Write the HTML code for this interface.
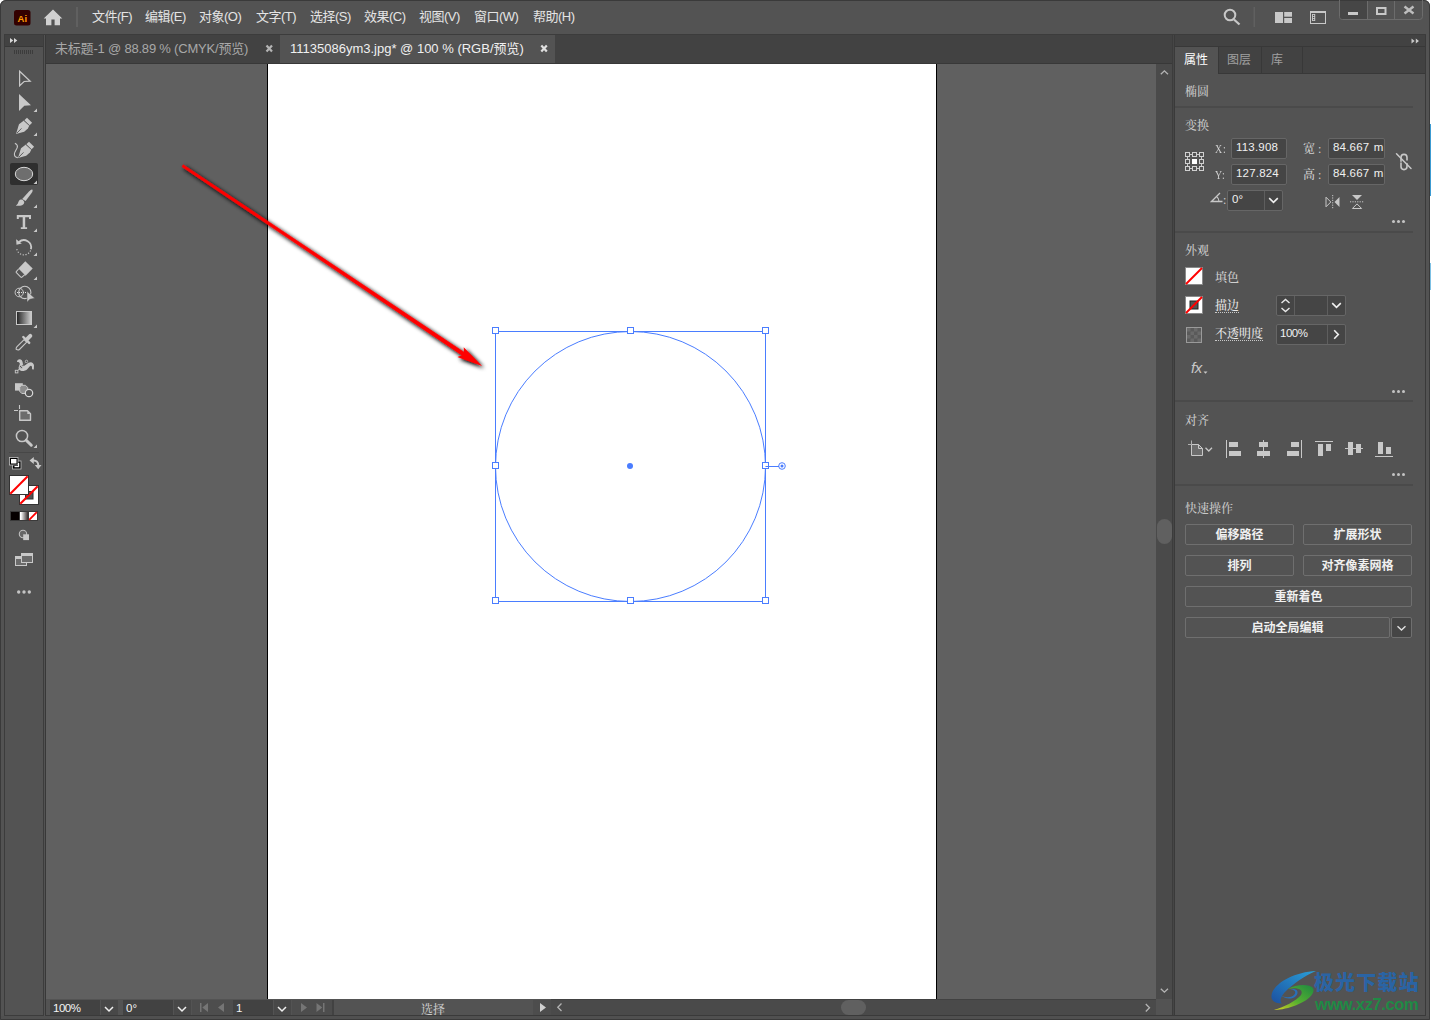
<!DOCTYPE html>
<html lang="zh-CN">
<head>
<meta charset="utf-8">
<title>Adobe Illustrator</title>
<style>
*{box-sizing:border-box;margin:0;padding:0}
html,body{width:1431px;height:1021px;overflow:hidden;background:#ffffff}
body{position:relative;font-family:"Liberation Sans","Noto Sans CJK SC",sans-serif;font-size:12px;color:#d6d6d6}
.abs{position:absolute}
#win{position:absolute;left:0;top:0;width:1430px;height:1020px;background:#535353;overflow:hidden;border-radius:6px 6px 0 0}
/* menu bar */
#menubar{position:absolute;left:0;top:0;width:1430px;height:34px;background:#535353}
#menubar .mi{position:absolute;top:8px;font-size:13px;color:#e4e4e4;white-space:nowrap;line-height:17px;letter-spacing:-0.5px}
/* tab bar */
#tabbar{position:absolute;left:45px;top:35px;width:1128px;height:28px;background:#424242;border-left:1px solid #383838;border-right:1px solid #3c3c3c}
.tab{position:absolute;top:0;height:28px;font-size:13px;line-height:27px;white-space:nowrap}
/* canvas */
#canvas{position:absolute;left:46px;top:64px;width:1110px;height:935px;background:#606060;overflow:hidden}
#artboard{position:absolute;left:221px;top:0;width:670px;height:935px;background:#fff;border-left:1px solid #000;border-right:1px solid #000}
/* left tools */
#tools{position:absolute;left:4px;top:34px;width:40px;height:982px;background:#535353;border:1px solid #3c3c3c}
/* right panel */
#rpanel{position:absolute;left:1175px;top:35px;width:250px;height:980px;background:#535353}
.sec{position:absolute;left:10px;margin-top:1px;font-size:12px;color:#c8c8c8;line-height:14px;white-space:nowrap}
.hr{position:absolute;left:0;width:238px;height:2px;background:#4a4a4a}
.inp{position:absolute;background:#454545;border:1px solid #666;border-radius:2px;color:#f0f0f0;font-family:"Liberation Sans",sans-serif;font-size:11.500px;letter-spacing:0.200px;word-spacing:1px;line-height:17px;white-space:nowrap;overflow:hidden}
.btn{position:absolute;height:21px;border:1px solid #6f6f6f;border-radius:2px;background:#535353;color:#f0f0f0;font-size:12px;font-weight:bold;text-align:center;line-height:21px;white-space:nowrap}
.lbl{position:absolute;font-size:12px;color:#e8e8e8;white-space:nowrap;line-height:14px}
.dots{position:absolute;width:14px;height:4px}
.dots i{position:absolute;top:0;width:3px;height:3px;border-radius:50%;background:#c4c4c4}
.ptab{font-size:12px;line-height:16px;white-space:nowrap}
.sm{font-family:"Liberation Serif","Noto Serif CJK SC",serif;color:#d0d0d0}
.ul{border-bottom:1px dotted #c8c8c8;line-height:12px !important;padding-top:1px;padding-bottom:0}
.sb{top:1px;height:15px;font-family:"Liberation Sans",sans-serif;font-size:11.500px;letter-spacing:0.200px;line-height:17px;overflow:hidden;color:#f4f4f4;white-space:nowrap}
.sec,.lbl,.ss{font-family:"Liberation Serif","Noto Serif CJK SC",serif}
.sec,.lbl,.ss{font-weight:500}
</style>
</head>
<body>
<div id="win">

<!-- MENU BAR -->
<div id="menubar">
  <svg class="abs" style="left:14px;top:10px" width="17" height="16" viewBox="0 0 17 16"><rect x="0" y="0" width="16.5" height="15.5" rx="2.5" fill="#330000"/><text x="8.3" y="11.6" font-family="Liberation Sans, sans-serif" font-size="9.5" font-weight="bold" fill="#ff9a00" text-anchor="middle">Ai</text></svg>
  <svg class="abs" style="left:43px;top:9px" width="20" height="17" viewBox="0 0 20 17"><path d="M10 0.5 L19.3 9.6 L17 9.6 L17 16.2 L11.6 16.2 L11.6 10.5 L8.4 10.5 L8.4 16.2 L3 16.2 L3 9.6 L0.7 9.6 Z" fill="#d0d0d0"/></svg>
  <div class="abs" style="left:76px;top:7px;width:2px;height:20px;background:#606060"></div>
  <div class="mi" style="left:92px">文件(F)</div>
  <div class="mi" style="left:145px">编辑(E)</div>
  <div class="mi" style="left:199px">对象(O)</div>
  <div class="mi" style="left:256px">文字(T)</div>
  <div class="mi" style="left:310px">选择(S)</div>
  <div class="mi" style="left:364px">效果(C)</div>
  <div class="mi" style="left:419px">视图(V)</div>
  <div class="mi" style="left:474px">窗口(W)</div>
  <div class="mi" style="left:533px">帮助(H)</div>
</div>
<div class="abs" style="left:4px;top:34px;width:1422px;height:1px;background:#3c3c3c"></div>

<!-- TAB BAR -->
<div id="tabbar">
  <div class="tab" style="left:0;width:234px;color:#a8a8a8;padding-left:9px;letter-spacing:-0.2px">未标题-1 @ 88.89 % (CMYK/预览)</div>
  <div class="tab" style="left:234px;width:275px;background:#535353;color:#f0f0f0;padding-left:10px">11135086ym3.jpg* @ 100 % (RGB/预览)</div>
</div>
<div class="abs" style="left:45px;top:63px;width:1128px;height:1px;background:#383838"></div>

<!-- CANVAS -->
<div id="canvas">
  <div id="artboard"></div>
  <svg class="abs" style="left:0;top:0" width="1110" height="935" viewBox="46 64 1110 935">
    <defs><filter id="ash" x="-5%" y="-5%" width="110%" height="110%"><feGaussianBlur in="SourceAlpha" stdDeviation="2.100"/><feOffset dx="1.700" dy="2.300"/><feComponentTransfer><feFuncA type="linear" slope="1.200"/></feComponentTransfer><feMerge><feMergeNode/><feMergeNode in="SourceGraphic"/></feMerge></filter></defs>
    <g filter="url(#ash)"><path d="M183.2 164.7L465.5 353.2L463.5 356.2L182.0 166.7Z" fill="#ff0000" stroke="#ff0000" stroke-width="0.600" stroke-linejoin="round"/><polygon points="482.1,366.1 463.7,347.3 464.1,354.4 457.3,357.0" fill="#ff0000"/></g>
    <g fill="none" stroke="#4a7dff" stroke-width="1">
      <rect x="495.500" y="331.500" width="270" height="270"/>
      <circle cx="630.500" cy="466.500" r="135"/>
      <path d="M768 466.500H779"/>
      <circle cx="782" cy="466" r="3.300"/>
    </g>
    <circle cx="782" cy="466" r="1.500" fill="#4a7dff"/>
    <circle cx="630" cy="466" r="3" fill="#4a7dff"/>
    <g fill="#ffffff" stroke="#4a7dff" stroke-width="1">
      <rect x="492.500" y="327.500" width="6" height="6"/><rect x="627.500" y="327.500" width="6" height="6"/><rect x="762.500" y="327.500" width="6" height="6"/>
      <rect x="492.500" y="462.500" width="6" height="6"/><rect x="762.500" y="462.500" width="6" height="6"/>
      <rect x="492.500" y="597.500" width="6" height="6"/><rect x="627.500" y="597.500" width="6" height="6"/><rect x="762.500" y="597.500" width="6" height="6"/>
    </g>
    <path d="M765.500 466.500H769" stroke="#4a7dff" stroke-width="1"/>
  </svg>
</div>

<!-- LEFT TOOLS -->
<div id="tools">
  <div class="abs" style="left:0;top:0;width:38px;height:11px;background:#424242"></div>
  <div class="abs" style="left:0;top:11px;width:38px;height:1px;background:#383838"></div>
</div>
<svg class="abs" style="left:0;top:0" width="45" height="620" viewBox="0 0 45 620">
  <path d="M10 38L13.300 40.500L10 43Z M14 38L17.300 40.500L14 43Z" fill="#d8d8d8"/>
  <path d="M14.500 50V54M16.500 50V54M18.500 50V54M20.500 50V54M22.500 50V54M24.500 50V54M26.500 50V54M28.500 50V54M30.500 50V54M32.500 50V54" stroke="#3c3c3c" stroke-width="1"/>
  <g fill="#c8c8c8">
    <!-- corner marks -->
    <path d="M37 108.500V112H33.500Z M37 132.500V136H33.500Z M37 180.500V184H33.500Z M37 204.500V208H33.500Z M37 228.500V232H33.500Z M37 252.500V256H33.500Z M37 276.500V280H33.500Z M37 324.500V328H33.500Z M37 444.500V448H33.500Z"/>
  </g>
  <!-- selected tool bg -->
  <rect x="10" y="163" width="28" height="22" rx="2" fill="#2f2f2f"/>
  <path d="M37 180.500V184H33.500Z" fill="#c8c8c8"/>
  <!-- selection tool -->
  <path d="M19.600 71.300V85.700L24.100 81.500L30.200 81.200Z" fill="none" stroke="#c8c8c8" stroke-width="1.250" stroke-linejoin="miter"/>
  <!-- direct selection -->
  <path d="M19 94V111L24.300 105.800L31 105.300Z" fill="#c8c8c8"/>
  <!-- pen -->
  <g id="pen1">
    <path d="M16 133.900L19 124.200L23.900 120.600L29.400 125.600L27.900 128.500L24.200 131.700Z" fill="#c8c8c8"/>
    <path d="M24.300 120.200L27 117.700L32.100 122.700L29.600 125.300Z" fill="#c8c8c8"/>
    <path d="M23.800 120.500L29.500 125.600" stroke="#535353" stroke-width="0.700"/>
    <path d="M16.800 133.200L21.500 128.400" stroke="#535353" stroke-width="0.900"/>
  </g>
  <!-- curvature -->
  <g transform="translate(2,24)">
    <path d="M16 133.900L19 124.200L23.900 120.600L29.400 125.600L27.900 128.500L24.200 131.700Z" fill="#c8c8c8"/>
    <path d="M24.300 120.200L27 117.700L32.100 122.700L29.600 125.300Z" fill="#c8c8c8"/>
    <path d="M23.800 120.500L29.500 125.600" stroke="#535353" stroke-width="0.700"/>
    <path d="M16.800 133.200L21.500 128.400" stroke="#535353" stroke-width="0.900"/>
  </g>
  <path d="M14.900 143.200C17 144.300 18 145.300 17.300 147.300C16.500 149.800 14.400 151.800 14.400 154C14.400 156.300 15.800 157.500 17.800 157.600" fill="none" stroke="#c8c8c8" stroke-width="1.100"/>
  <!-- ellipse -->
  <ellipse cx="24" cy="174" rx="8.700" ry="6.700" fill="#6e6e6e" stroke="#d8d8d8" stroke-width="1"/>
  <!-- brush -->
  <g fill="#c8c8c8">
    <path d="M32.300 189.600C33 190.300 32.600 191.600 31.600 193L25.600 200.900L22.200 198.900L29.200 191.300C30.400 190 31.600 189 32.300 189.600Z"/>
    <path d="M21.300 199.400C23 199.600 24.600 201 24.200 203C23.600 205.600 19.500 206.200 15.800 205.700C18 204.500 18 202.500 19 200.800C19.600 199.800 20.400 199.300 21.300 199.400Z"/>
  </g>
  <!-- type -->
  <path d="M16.800 215H31V219H29V217.300H25.200V227.200H27.100V229.100H20.800V227.200H22.700V217.300H18.800V219H16.800Z" fill="#c8c8c8"/>
  <!-- rotate -->
  <path d="M19 242A7.300 7.300 0 0 1 30.900 249.300" fill="none" stroke="#c8c8c8" stroke-width="1.800"/>
  <path d="M16.100 239.300L21.800 243.600L16.500 244.800Z" fill="#c8c8c8"/>
  <path d="M30.600 250.500A7.300 7.300 0 0 1 16.800 249.200" fill="none" stroke="#c8c8c8" stroke-width="1.200" stroke-dasharray="1.200 1.600"/>
  <!-- eraser -->
  <path d="M25.300 261.200L32.700 268.600L25.600 275.700L18.400 268.400Z" fill="#c8c8c8"/>
  <path d="M18.600 269L16.300 271.600Q15.900 272.200 16.400 272.700L20.800 277.100Q21.400 277.600 22 277.100L24.800 274.600" fill="none" stroke="#c8c8c8" stroke-width="1.100"/>
  <!-- shape builder -->
  <ellipse cx="19.200" cy="292.500" rx="4.100" ry="4.300" fill="none" stroke="#c8c8c8" stroke-width="1"/>
  <ellipse cx="24.800" cy="292.400" rx="6.100" ry="6.200" fill="none" stroke="#c8c8c8" stroke-width="1.100"/>
  <path d="M17 292.500H27" stroke="#e0e0e0" stroke-width="1" stroke-dasharray="1 1"/>
  <path d="M27 291.300V302.200L29.800 299.300L34.800 298.300Z" fill="#c8c8c8" stroke="#535353" stroke-width="0.500"/>
  <!-- gradient -->
  <defs><linearGradient id="gr1" x1="0" x2="1" y1="0" y2="0"><stop offset="0" stop-color="#222"/><stop offset="1" stop-color="#d0d0d0"/></linearGradient>
  <linearGradient id="gr2" x1="0" x2="1" y1="0" y2="0"><stop offset="0" stop-color="#fff"/><stop offset="0.150" stop-color="#fff"/><stop offset="1" stop-color="#2a2020"/></linearGradient></defs>
  <rect x="16.500" y="311.500" width="15" height="13" fill="url(#gr1)" stroke="#c8c8c8" stroke-width="1"/>
  <!-- eyedropper -->
  <path d="M16.200 349.300Q15.800 348 16.800 346.900L24.100 339.600L26.700 342.200L19.400 349.500Q18 350.400 16.200 349.300Z" fill="none" stroke="#c8c8c8" stroke-width="1.100" stroke-linejoin="round"/>
  <path d="M23.300 337L29.200 342.900" stroke="#c8c8c8" stroke-width="2.400" stroke-linecap="round"/>
  <path d="M26.600 339.600L30.300 335.900" stroke="#c8c8c8" stroke-width="4" stroke-linecap="round"/>
  <!-- puppet warp -->
  <path d="M17 362C17 359.500 20 358.300 21.800 360.300C23.200 362 22.600 364.500 23.500 366.200C25 365.800 26.500 364 28.500 362.800C31 361.300 33.800 362.500 34 365.500L33.800 369.500L32 369.300C32.200 367.500 32 365.800 30.800 365.800C29.300 366 28.800 368 27 369.600C24.500 371.700 20 371.600 18.800 369C18 367 19.800 365.500 19.800 363.800C19.800 362.300 18.300 361.800 17 362Z" fill="#c8c8c8"/>
  <circle cx="21" cy="367" r="1.700" fill="#535353" stroke="#c8c8c8" stroke-width="0.800"/>
  <path d="M17.300 371L26 361.900" stroke="#c8c8c8" stroke-width="0.900"/>
  <path d="M22.300 365.700L25.500 362.400" stroke="#535353" stroke-width="0.900"/>
  <rect x="15.300" y="370.300" width="2.600" height="2.600" fill="#535353" stroke="#c8c8c8" stroke-width="0.900"/>
  <circle cx="26.500" cy="361.400" r="1.200" fill="#535353" stroke="#c8c8c8" stroke-width="0.800"/>
  <!-- live paint -->
  <rect x="15" y="383.200" width="7.800" height="7.400" fill="#c8c8c8"/>
  <path d="M21.500 385.300H25.500L27.700 387.500V391.300L25.500 393.500H21.800L19.700 391.300V387.200Z" fill="#8c8c8c" stroke="#c8c8c8" stroke-width="1"/>
  <circle cx="29" cy="393" r="3.700" fill="#535353" stroke="#d8d8d8" stroke-width="1.200"/>
  <!-- artboard -->
  <path d="M19.500 405V409 M14 410.500H18" stroke="#c8c8c8" stroke-width="1.100"/>
  <path d="M19.700 410.700H27.500L30.500 413.700V420.300H19.700Z" fill="#6c6c6c" stroke="#c8c8c8" stroke-width="1.400" stroke-linejoin="round"/>
  <path d="M27.300 410.700V414H30.500Z" fill="#c8c8c8"/>
  <!-- zoom -->
  <circle cx="22" cy="436" r="5.600" fill="none" stroke="#c8c8c8" stroke-width="1.500"/>
  <path d="M26.200 440.200L31.300 445.200" stroke="#c8c8c8" stroke-width="3" stroke-linecap="round"/>
  <!-- separator -->
  <rect x="9" y="452" width="30" height="1" fill="#474747"/>
  <!-- default fill/stroke -->
  <rect x="12.500" y="461" width="8.500" height="8" fill="#000" stroke="#c0c0c0" stroke-width="0.800"/>
  <rect x="9.500" y="457.500" width="8.500" height="7.500" fill="#000" stroke="#c0c0c0" stroke-width="0.800"/>
  <rect x="11" y="459" width="5.500" height="4.500" fill="#fff"/>
  <rect x="14.500" y="466" width="4.500" height="1.200" fill="#fff"/><rect x="18" y="463" width="1.200" height="4" fill="#fff"/>
  <!-- swap -->
  <path d="M33 460.500C36.500 460 38.300 462.500 38.300 465.500" fill="none" stroke="#c8c8c8" stroke-width="2"/>
  <path d="M29.500 460.500L33.800 457V464Z M34.800 465H41.500L38.200 469.300Z" fill="#c8c8c8"/>
  <!-- fill / stroke boxes -->
  <rect x="19.500" y="485.500" width="19" height="19" fill="#fff" stroke="#333" stroke-width="1"/>
  <rect x="25.500" y="491.500" width="7.500" height="7.500" fill="#535353" stroke="#333" stroke-width="1"/>
  <path d="M20.300 503.700L37.700 486.300" stroke="#ff0000" stroke-width="2"/>
  <rect x="9.500" y="475.500" width="19" height="19" fill="#fff" stroke="#333" stroke-width="1"/>
  <path d="M10.300 493.700L27.700 476.300" stroke="#ff0000" stroke-width="2"/>
  <!-- color / gradient / none -->
  <rect x="10.500" y="511.500" width="9" height="9" fill="#050000" stroke="#3a3a3a"/>
  <rect x="19.500" y="511.500" width="9" height="9" fill="url(#gr2)" stroke="#3a3a3a"/>
  <rect x="28.500" y="511.500" width="9" height="9" fill="#fff" stroke="#3a3a3a"/>
  <path d="M29.200 519.800L36.800 512.200" stroke="#ff0000" stroke-width="1.800"/>
  <!-- draw mode -->
  <circle cx="23" cy="534" r="3.700" fill="#666" stroke="#c0c0c0" stroke-width="1.100"/>
  <rect x="23.200" y="534.300" width="5.800" height="5.800" fill="#c8c8c8"/>
  <!-- screen mode -->
  <rect x="15.500" y="556.500" width="11" height="9" fill="#6a6a6a" stroke="#c8c8c8"/>
  <rect x="21.500" y="553.500" width="11" height="9" fill="#6a6a6a" stroke="#c8c8c8"/>
  <rect x="22" y="554" width="10" height="2" fill="#c8c8c8"/>
  <rect x="16" y="557" width="5" height="2" fill="#c8c8c8"/>
  <!-- dots -->
  <circle cx="18.700" cy="592" r="1.700" fill="#c4c4c4"/><circle cx="24" cy="592" r="1.700" fill="#c4c4c4"/><circle cx="29.300" cy="592" r="1.700" fill="#c4c4c4"/>
</svg>

<!-- RIGHT PANEL -->
<div id="rpanel">
  <!-- header strip -->
  <div class="abs" style="left:0;top:0;width:250px;height:11px;background:#424242"></div>
  <svg class="abs" style="left:236px;top:3px" width="9" height="6" viewBox="0 0 9 6"><path d="M0.5 0.5 L3.7 3 L0.5 5.5 Z M4.8 0.5 L8 3 L4.8 5.5 Z" fill="#c8c8c8"/></svg>
  <div class="abs" style="left:0;top:11px;width:250px;height:1px;background:#383838"></div>
  <!-- tabs -->
  <div class="abs" style="left:0;top:12px;width:250px;height:27px;background:#424242"></div>
  <div class="abs" style="left:0;top:12px;width:43px;height:28px;background:#535353"></div>
  <div class="abs" style="left:43px;top:12px;width:1px;height:27px;background:#383838"></div>
  <div class="abs" style="left:86px;top:12px;width:1px;height:27px;background:#383838"></div>
  <div class="abs" style="left:127px;top:12px;width:1px;height:27px;background:#383838"></div>
  <div class="abs" style="left:43px;top:38px;width:207px;height:1px;background:#383838"></div>
  <div class="abs ptab" style="left:9px;top:17px;color:#ffffff">属性</div>
  <div class="abs ptab" style="left:52px;top:17px;color:#a0a0a0">图层</div>
  <div class="abs ptab" style="left:96px;top:17px;color:#a0a0a0">库</div>

  <div class="sec" style="top:49px">椭圆</div>
  <div class="hr" style="top:71px"></div>

  <!-- TRANSFORM -->
  <div class="sec" style="top:83px">变换</div>
  <svg class="abs" style="left:10px;top:117px" width="20" height="20" viewBox="0 0 20 20" fill="none" stroke="#d0d0d0" stroke-width="1">
    <path d="M2.500 2.500H16.500V16.500H2.500Z" stroke="#c8c8c8"/>
    <g fill="#535353"><rect x="0.5" y="0.5" width="4" height="4"/><rect x="7.5" y="0.5" width="4" height="4"/><rect x="14.5" y="0.5" width="4" height="4"/>
    <rect x="0.5" y="7.5" width="4" height="4"/><rect x="14.5" y="7.5" width="4" height="4"/>
    <rect x="0.5" y="14.5" width="4" height="4"/><rect x="7.5" y="14.5" width="4" height="4"/><rect x="14.5" y="14.5" width="4" height="4"/></g>
    <rect x="7.5" y="7.5" width="4" height="4" fill="#ffffff" stroke="#ffffff"/>
  </svg>
  <div class="lbl sm" style="left:40px;top:107px;transform:scaleX(0.820);transform-origin:0 0;letter-spacing:1px">X:</div>
  <div class="inp" style="left:56px;top:103px;width:56px;height:21px;padding-left:4px">113.908</div>
  <div class="lbl sm" style="left:40px;top:133px;transform:scaleX(0.820);transform-origin:0 0;letter-spacing:1px">Y:</div>
  <div class="inp" style="left:56px;top:129px;width:56px;height:21px;padding-left:4px">127.824</div>
  <div class="lbl sm" style="left:128px;top:107px">宽 :</div>
  <div class="inp" style="left:153px;top:103px;width:57px;height:21px;padding-left:4px">84.667 m</div>
  <div class="lbl sm" style="left:128px;top:133px">高 :</div>
  <div class="inp" style="left:153px;top:129px;width:57px;height:21px;padding-left:4px">84.667 m</div>
  <!-- link broken icon -->
  <svg class="abs" style="left:220px;top:117px" width="18" height="20" viewBox="0 0 18 20" fill="none" stroke="#c8c8c8" stroke-width="1.6" stroke-linecap="round">
    <path d="M6 9.200V5.400a3 3 0 0 1 6 0V8"/><path d="M6 11V14.600a3 3 0 0 0 6 0V11.800"/><path d="M1.500 1.800L16 16.500" stroke-width="1.500"/>
  </svg>
  <!-- angle -->
  <svg class="abs" style="left:35px;top:157px" width="14" height="12" viewBox="0 0 14 12" fill="none" stroke="#c8c8c8" stroke-width="1.3"><path d="M10 1L1.5 9.5H12.5"/><path d="M6.5 4.5a6 6 0 0 1 2.5 5" stroke-width="1.1"/></svg>
  <div class="lbl sm" style="left:48px;top:158px">:</div>
  <div class="inp" style="left:52px;top:155px;width:56px;height:21px;padding-left:4px">0°</div>
  <div class="abs" style="left:89px;top:156px;width:1px;height:19px;background:#5e5e5e"></div>
  <svg class="abs" style="left:93px;top:162px" width="11" height="7" viewBox="0 0 11 7" fill="none" stroke="#f0f0f0" stroke-width="1.6"><path d="M1.2 1.2L5.5 5.3L9.8 1.2"/></svg>
  <!-- flip icons -->
  <svg class="abs" style="left:150px;top:160px" width="16" height="14" viewBox="0 0 16 14"><path d="M1 2.2L5.8 7L1 11.8Z" fill="none" stroke="#c8c8c8" stroke-width="1"/><path d="M14.5 2L9.5 7L14.5 12Z" fill="#c8c8c8"/><path d="M7.7 0V14" stroke="#c8c8c8" stroke-width="1" stroke-dasharray="1.2 1.2"/></svg>
  <svg class="abs" style="left:175px;top:159px" width="14" height="16" viewBox="0 0 14 16"><path d="M2 1H12L7 6Z" fill="#c8c8c8"/><path d="M2.4 14.5H11.6L7 9.9Z" fill="none" stroke="#c8c8c8" stroke-width="1"/><path d="M0 7.8H14" stroke="#c8c8c8" stroke-width="1" stroke-dasharray="1.2 1.2"/></svg>
  <div class="dots" style="left:217px;top:185px"><i style="left:0"></i><i style="left:5px"></i><i style="left:10px"></i></div>
  <div class="hr" style="top:196px"></div>
<!-- APPEARANCE -->
  <div class="sec" style="top:208px">外观</div>
  <svg class="abs" style="left:10px;top:232px" width="18" height="18" viewBox="0 0 18 18"><rect x="0.5" y="0.5" width="17" height="17" fill="#fff" stroke="#8a8a8a"/><path d="M1 17L17 1" stroke="#ff0000" stroke-width="2"/></svg>
  <div class="lbl" style="left:40px;top:236px;color:#d0d0d0">填色</div>
  <svg class="abs" style="left:10px;top:261px" width="18" height="18" viewBox="0 0 18 18"><rect x="0.5" y="0.5" width="17" height="17" fill="#fff" stroke="#8a8a8a"/><rect x="5" y="5" width="8" height="8" fill="#535353" stroke="#222" stroke-width="1"/><path d="M1 17L17 1" stroke="#ff0000" stroke-width="2"/></svg>
  <div class="lbl ul" style="left:40px;top:264px">描边</div>
  <div class="inp" style="left:101px;top:260px;width:70px;height:21px"></div>
  <div class="abs" style="left:119px;top:261px;width:1px;height:19px;background:#5e5e5e"></div>
  <div class="abs" style="left:152px;top:261px;width:1px;height:19px;background:#5e5e5e"></div>
  <svg class="abs" style="left:105px;top:263px" width="11" height="15" viewBox="0 0 11 15" fill="none" stroke="#e8e8e8" stroke-width="1.4"><path d="M1.5 5L5.5 1.5L9.5 5"/><path d="M1.5 10L5.5 13.5L9.5 10"/></svg>
  <svg class="abs" style="left:156px;top:267px" width="11" height="7" viewBox="0 0 11 7" fill="none" stroke="#f0f0f0" stroke-width="1.6"><path d="M1.2 1.2L5.5 5.3L9.8 1.2"/></svg>
  <svg class="abs" style="left:10px;top:291px" width="18" height="18" viewBox="0 0 18 18"><rect x="1.5" y="1.5" width="15" height="15" fill="#5a5a5a" stroke="#9a9a9a"/><g fill="#6a6a6a"><rect x="2" y="2" width="3.5" height="3.5"/><rect x="9" y="2" width="3.5" height="3.5"/><rect x="5.5" y="5.5" width="3.5" height="3.5"/><rect x="12.5" y="5.5" width="3.5" height="3.5"/><rect x="2" y="9" width="3.5" height="3.5"/><rect x="9" y="9" width="3.5" height="3.5"/><rect x="5.5" y="12.5" width="3.5" height="3.5"/><rect x="12.5" y="12.5" width="3.5" height="3.5"/></g></svg>
  <div class="lbl ul" style="left:40px;top:292px">不透明度</div>
  <div class="inp" style="left:101px;top:289px;width:70px;height:21px;padding-left:3px;letter-spacing:-0.500px">100%</div>
  <div class="abs" style="left:152px;top:290px;width:1px;height:19px;background:#5e5e5e"></div>
  <svg class="abs" style="left:158px;top:294px" width="7" height="11" viewBox="0 0 7 11" fill="none" stroke="#f0f0f0" stroke-width="1.6"><path d="M1.2 1.2L5.3 5.5L1.2 9.8"/></svg>
  <div class="abs" style="left:16px;top:325px;font-family:'Liberation Sans',sans-serif;font-style:italic;font-size:15px;line-height:16px;color:#c8c8c8;letter-spacing:-0.3px">fx</div>
  <svg class="abs" style="left:28px;top:336px" width="5" height="3" viewBox="0 0 5 3"><path d="M0.5 0.5H4.5L2.5 2.8Z" fill="#c8c8c8"/></svg>
  <div class="dots" style="left:217px;top:355px"><i style="left:0"></i><i style="left:5px"></i><i style="left:10px"></i></div>
  <div class="hr" style="top:365px"></div>

  <!-- ALIGN -->
  <div class="sec" style="top:378px">对齐</div>
  <svg class="abs" style="left:10px;top:404px" width="212" height="22" viewBox="1185 439 212 22">
    <g fill="none" stroke="#c8c8c8" stroke-width="1"><path d="M1191.500 440.500V444 M1188 444.500H1191" stroke="#b0b0b0"/><path d="M1191.500 444.500H1198.500L1202.500 448.500V455.500H1191.500Z" fill="#6c6c6c"/><path d="M1198.500 444.500V448.500H1202.500"/><path d="M1205.500 447.800L1208.800 451L1212 447.800" stroke-width="1.300"/></g>
    <g fill="#c8c8c8">
      <rect x="1226" y="440" width="1" height="18"/><rect x="1229" y="442" width="9" height="5"/><rect x="1229" y="451" width="12" height="5"/>
      <rect x="1263" y="440" width="1" height="18"/><rect x="1259" y="442" width="9" height="5"/><rect x="1257" y="451" width="13" height="5"/>
      <rect x="1301" y="440" width="1" height="18"/><rect x="1291" y="442" width="8" height="5"/><rect x="1287" y="451" width="12" height="5"/>
      <rect x="1315" y="441" width="18" height="1"/><rect x="1318" y="444" width="5" height="12"/><rect x="1326" y="444" width="5" height="7"/>
      <rect x="1345" y="448" width="18" height="1"/><rect x="1348" y="442" width="5" height="13"/><rect x="1356" y="444" width="5" height="9"/>
      <rect x="1375" y="456" width="18" height="1"/><rect x="1378" y="442" width="5" height="12"/><rect x="1386" y="447" width="5" height="7"/>
    </g>
  </svg>
  <div class="dots" style="left:217px;top:438px"><i style="left:0"></i><i style="left:5px"></i><i style="left:10px"></i></div>
  <div class="hr" style="top:449px"></div>

  <!-- QUICK ACTIONS -->
  <div class="sec" style="top:466px">快速操作</div>
  <div class="btn" style="left:10px;top:489px;width:109px">偏移路径</div>
  <div class="btn" style="left:128px;top:489px;width:109px">扩展形状</div>
  <div class="btn" style="left:10px;top:520px;width:109px">排列</div>
  <div class="btn" style="left:128px;top:520px;width:109px">对齐像素网格</div>
  <div class="btn" style="left:10px;top:551px;width:227px">重新着色</div>
  <div class="btn" style="left:10px;top:582px;width:205px">启动全局编辑</div>
  <div class="btn" style="left:216px;top:582px;width:21px;background:#454545"></div>
  <svg class="abs" style="left:221px;top:590px" width="11" height="7" viewBox="0 0 11 7" fill="none" stroke="#e0e0e0" stroke-width="1.4"><path d="M1.5 1.2L5.5 5L9.5 1.2"/></svg>

</div>

<!-- frame lines -->
<div class="abs" style="left:45px;top:64px;width:1px;height:952px;background:#383838"></div>
<div class="abs" style="left:1172px;top:35px;width:1px;height:981px;background:#3c3c3c"></div>
<div class="abs" style="left:1173px;top:35px;width:1px;height:981px;background:#464646"></div>
<div class="abs" style="left:1174px;top:35px;width:1px;height:981px;background:#3a3a3a"></div>
<div class="abs" style="left:1425px;top:35px;width:1px;height:981px;background:#3a3a3a"></div>
<div class="abs" style="left:45px;top:1015px;width:1381px;height:1px;background:#3a3a3a"></div>
<div class="abs" style="left:0;top:1016px;width:1430px;height:3px;background:#505050"></div>
<!-- window border -->
<div class="abs" style="left:0;top:0;width:1430px;height:1020px;border:1px solid #3a3a3a;border-radius:6px 6px 0 0;pointer-events:none"></div>

<!-- vertical scrollbar -->
<div class="abs" style="left:1156px;top:64px;width:16px;height:935px;background:#4a4a4a"></div>
<svg class="abs" style="left:1156px;top:64px" width="16" height="935" viewBox="0 0 16 935" fill="none" stroke="#b4b4b4" stroke-width="1.300">
  <path d="M4.800 10.300L8.400 6.800L12 10.300"/><path d="M4.800 924.700L8.400 928.200L12 924.700"/>
  <rect x="1" y="455" width="15" height="25" rx="7.500" fill="#606060" stroke="none"/>
</svg>
<!-- status bar -->
<div id="status" class="abs" style="left:46px;top:999px;width:1126px;height:16px;background:#535353">
  <div class="abs sb" style="left:4px;width:50px;background:#424242;padding-left:3px;letter-spacing:-0.500px">100%</div>
  <div class="abs sb" style="left:55px;width:17px;background:#484848"></div>
  <div class="abs sb" style="left:77px;width:50px;background:#424242;padding-left:3px">0°</div>
  <div class="abs sb" style="left:128px;width:17px;background:#484848"></div>
  <div class="abs sb" style="left:146px;width:41px;background:#4d4d4d"></div>
  <div class="abs sb" style="left:187px;width:40px;background:#424242;padding-left:3px">1</div>
  <div class="abs sb" style="left:228px;width:17px;background:#484848"></div>
  <div class="abs sb" style="left:246px;width:40px;background:#4d4d4d"></div>
  <div class="abs sb" style="left:286px;width:2px;background:#424242"></div>
  <div class="abs ss" style="left:375px;top:4px;width:24px;height:15px;font-size:12px;line-height:15px;color:#c8c8c8;white-space:nowrap">选择</div>
  <div class="abs sb" style="left:487px;width:18px;background:#4d4d4d"></div>
  <div class="abs" style="left:505px;top:0;width:605px;height:16px;background:#4a4a4a;border-top:1px solid #414141"></div>
  <svg class="abs" style="left:0;top:0" width="1126" height="16" viewBox="46 999 1126 16">
    <g fill="none" stroke="#f0f0f0" stroke-width="1.500"><path d="M105 1007L109 1011L113 1007"/><path d="M178 1007L182 1011L186 1007"/><path d="M278 1007L282 1011L286 1007"/></g>
    <g fill="#757575"><path d="M200 1003H201.500V1012H200Z M208 1003V1012L202.300 1007.500Z M224 1003V1012L218 1007.500Z"/>
    <path d="M301 1003V1012L307 1007.500Z M316.500 1003V1012L322.300 1007.500Z M323 1003H324.500V1012H323Z"/></g>
    <path d="M540 1003V1012L546 1007.500Z" fill="#d0d0d0"/>
    <g fill="none" stroke="#b4b4b4" stroke-width="1.300"><path d="M561.500 1003.500L557.800 1007.300L561.500 1011"/><path d="M1145.800 1004L1149.500 1007.800L1145.800 1011.500"/></g>
    <rect x="841" y="1000" width="25" height="15" rx="7.500" fill="#606060"/>
  </svg>
</div>

<!-- tab close icons -->
<svg class="abs" style="left:260px;top:40px" width="300" height="18" viewBox="260 40 300 18" stroke="#b4b4b4" stroke-width="2.200"><path d="M266.500 45.500L272 51.500M272 45.500L266.500 51.500"/><path d="M541.300 45.500L546.800 51.500M546.800 45.500L541.300 51.500" stroke="#e0e0e0"/></svg>

<!-- top-right icons -->
<svg class="abs" style="left:1215px;top:0" width="215" height="34" viewBox="1215 0 215 34">
  <circle cx="1230" cy="15" r="5.300" fill="none" stroke="#c8c8c8" stroke-width="2"/><path d="M1234 19.500L1239.500 24.500" stroke="#c8c8c8" stroke-width="2.200"/>
  <rect x="1253.500" y="7" width="1.500" height="20" fill="#606060"/>
  <g fill="#c8c8c8"><rect x="1275" y="12" width="8" height="11"/><rect x="1284.200" y="12" width="7.800" height="4.700"/><rect x="1284.200" y="18" width="7.800" height="5"/></g>
  <rect x="1310.500" y="11.500" width="15" height="12" fill="none" stroke="#c8c8c8" stroke-width="1"/><rect x="1310" y="11" width="16" height="2" fill="#c8c8c8"/>
  <rect x="1312" y="14" width="3.200" height="7" fill="#c8c8c8"/><g fill="#444"><circle cx="1313.600" cy="15.400" r="0.700"/><circle cx="1313.600" cy="17.500" r="0.700"/><circle cx="1313.600" cy="19.600" r="0.700"/></g>
  <!-- window controls -->
  <path d="M1339.500 0V16.500Q1339.500 19.500 1342.500 19.500H1419.500Q1422.500 19.500 1422.500 16.500V0" fill="none" stroke="#6c6c6c" stroke-width="1"/>
  <path d="M1340 1V16.500Q1340 19 1342.500 19H1367V1Z" fill="#464646"/>
  <path d="M1367.500 1V19.500M1394.500 1V19.500" stroke="#6c6c6c" stroke-width="1"/>
  <rect x="1348" y="12" width="10" height="3" fill="#c8c8c8"/>
  <rect x="1377" y="8" width="8.500" height="6" fill="none" stroke="#c8c8c8" stroke-width="2"/>
  <path d="M1404.500 6.500L1413.500 13.500M1413.500 6.500L1404.500 13.500" stroke="#bdbdbd" stroke-width="2.400"/>
</svg>

<!-- watermark -->
<div class="abs wm1" style="left:1314px;top:969px;font-size:20px;line-height:28px;font-weight:900;color:#2a64a4;white-space:nowrap;letter-spacing:1.100px">极光下载站</div>
<div class="abs wm2" style="left:1315px;top:992px;font-size:16.500px;line-height:24px;font-weight:bold;color:#1f8a45;white-space:nowrap;letter-spacing:-0.400px">www.xz7.com</div>
<svg class="abs" style="left:1268px;top:968px" width="52" height="46" viewBox="1268 968 52 46">
  <defs><linearGradient id="wg1" x1="0" y1="1" x2="1" y2="0"><stop offset="0" stop-color="#1c50a0"/><stop offset="1" stop-color="#2aa0d8"/></linearGradient>
  <linearGradient id="wg2" x1="0" y1="1" x2="1" y2="0"><stop offset="0" stop-color="#d8d020"/><stop offset="0.450" stop-color="#58b030"/><stop offset="1" stop-color="#1e8a40"/></linearGradient></defs>
  <path d="M1316 971C1296 972 1277 981 1272 993C1270 999 1273 1003.500 1282 1003.500C1279 1001 1281 996 1286 991C1293 984 1304 976 1316 971Z" fill="url(#wg1)"/>
  <path d="M1290 990C1294 989 1297 992 1294 995C1291 998 1284 998 1281 995C1284 999 1292 1000 1296 996C1300 992 1296 987 1290 990Z" fill="#2a70b8"/>
  <path d="M1288 989C1296 984 1310 984 1313 988C1316 994 1306 1002 1294 1006C1286 1009 1278 1010 1274 1010C1284 1007 1296 1001 1301 995C1304 990 1298 987 1288 989Z" fill="url(#wg2)"/>
</svg>

</div>
<div class="abs" style="left:1430px;top:124px;width:1px;height:72px;background:#3c9bd2"></div>
<div class="abs" style="left:1430px;top:263px;width:1px;height:27px;background:#7cc0e4"></div>
</body>
</html>
